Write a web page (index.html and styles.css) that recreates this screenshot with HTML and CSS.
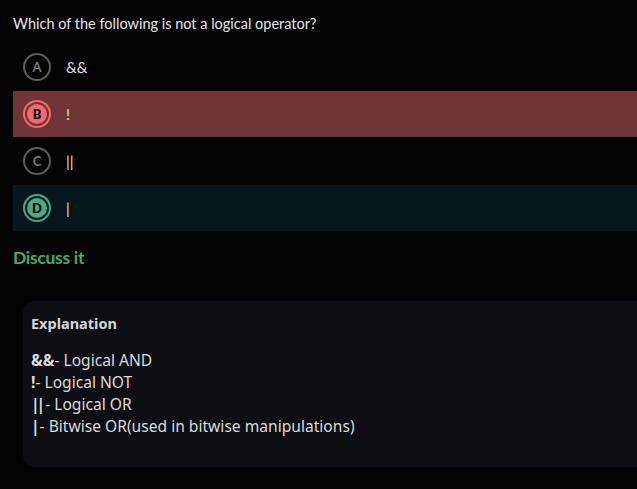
FILE: index.html
```html
<!DOCTYPE html>
<html>
<head>
<meta charset="utf-8">
<link rel="stylesheet" href="styles.css">
</head>
<body>
<div class="page">
  <p class="question">Which of the following is not a logical operator?</p>
  <div class="options">
    <div class="option">
      <span class="badge"><span class="dot">A</span></span>
      <span class="otext">&amp;&amp;</span>
    </div>
    <div class="option wrong">
      <span class="badge"><span class="dot">B</span></span>
      <span class="otext">!</span>
    </div>
    <div class="option">
      <span class="badge"><span class="dot">C</span></span>
      <span class="otext">||</span>
    </div>
    <div class="option right">
      <span class="badge"><span class="dot">D</span></span>
      <span class="otext">|</span>
    </div>
  </div>
  <a class="discuss">Discuss it</a>
  <div class="card">
    <div class="card-title">Explanation</div>
    <div class="card-body">
      <div><b class="op">&amp;&amp;</b>- Logical AND</div>
      <div><b class="op">!</b>- Logical NOT</div>
      <div><b class="op pipes">||</b>- Logical OR</div>
      <div><b class="op">|</b>- Bitwise OR(used in bitwise manipulations)</div>
    </div>
  </div>
</div>
</body>
</html>
```
FILE: styles.css
```css
html, body {
  margin: 0;
  padding: 0;
  background: #030304;
  overflow: hidden;
}
.page {
  padding: 14px 0 0 13px;
  font-family: "Lato", "Liberation Sans", sans-serif;
  color: #e6e6e6;
}
.question {
  margin: 0;
  font-size: 14.5px;
  line-height: 20px;
  color: #e8e8e8;
}
.options {
  display: flex;
  flex-direction: column;
  gap: 1px;
  margin-top: 10px;
}
.option {
  height: 46px;
  display: flex;
  align-items: center;
  padding-left: 10px;
}
.badge {
  width: 24px;
  height: 24px;
  border: 2px solid #5d5d5f;
  border-radius: 50%;
  display: flex;
  align-items: center;
  justify-content: center;
}
.dot {
  width: 20px;
  height: 20px;
  border-radius: 50%;
  display: flex;
  align-items: center;
  justify-content: center;
  font-size: 13px;
  font-weight: 700;
  color: #7a7a7c;
}
.otext {
  margin-left: 15px;
  font-size: 15px;
  color: #e0e0e0;
}
.wrong { background: #713436; }
.wrong .badge { border-color: #f06a6f; }
.wrong .dot { background: #f06a6f; color: #000; font-weight: 900; }
.right { background: #06181b; }
.right .badge { border-color: #4da58a; }
.right .dot { background: #4da58a; color: #000; font-weight: 900; }
.discuss {
  display: block;
  margin-top: 16px;
  font-size: 17.5px;
  font-weight: 700;
  color: #49a960;
  letter-spacing: -0.3px;
  line-height: 22px;
}
.card {
  margin: 32px 0 0 10px;
  background: #0d0e13;
  border-radius: 12px 0 0 12px;
  padding: 12px 8px 20px 8px;
  height: 134px;
  font-family: "Noto Sans", "Open Sans", sans-serif;
}
.card-title {
  font-size: 14.5px;
  font-weight: 700;
  color: #d6d6d8;
  line-height: 20px;
}
.card-body {
  margin-top: 16px;
  font-size: 15.6px;
  line-height: 22px;
  color: #dcdcde;
}
.card-body .op { font-weight: 700; }
.card-body .pipes { letter-spacing: -3px; margin-right: 3px; }
```
